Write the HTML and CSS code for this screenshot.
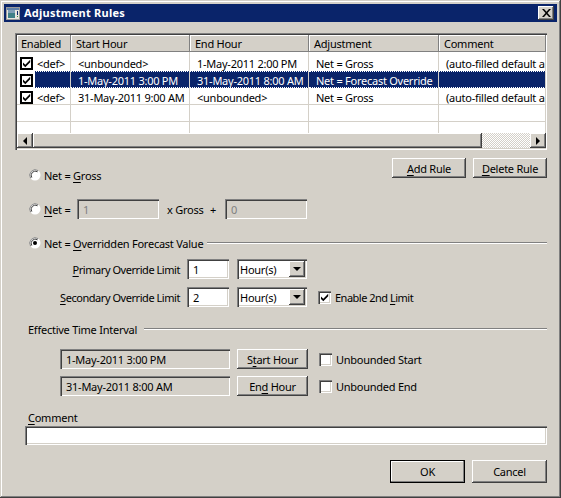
FILE: index.html
```html
<!DOCTYPE html>
<html lang="en">
<head>
<meta charset="utf-8">
<title>Adjustment Rules</title>
<link rel="stylesheet" href="styles.css">
</head>
<body>
<svg class="defs" width="0" height="0" aria-hidden="true">
  <symbol id="check" viewBox="0 0 13 13"><path d="M3 5.500v2.400l2.300 2.300 4.900-5V2.800L5.300 7.700z" fill="#000"/></symbol>
  <symbol id="radio" viewBox="0 0 12 12">
    <circle cx="6" cy="6" r="5.500" fill="#fff"/>
    <path d="M1.600 9.200A5.500 5.500 0 0 1 9.200 1.600" fill="none" stroke="#808080"/>
    <path d="M2.800 8.600A4.200 4.200 0 0 1 8.600 2.800" fill="none" stroke="#404040"/>
  </symbol>
  <symbol id="dot" viewBox="0 0 12 12"><circle cx="6" cy="6" r="2" fill="#000"/></symbol>
</svg>
<div class="window">
  <div class="titlebar">
    <svg class="app-icon" width="14" height="13" viewBox="0 0 14 13"><rect x=".5" y=".5" width="13" height="12" fill="#e8e6e0" stroke="#9a9a9a"/><rect x="1" y="1" width="12" height="2" fill="#5f7fa8"/><rect x="2" y="3" width="7" height="8" fill="#3f8088"/><rect x="2" y="3" width="7" height="3" fill="#7f9fb8"/><rect x="11" y="4" width="1" height="4" fill="#0a246a"/><rect x="11" y="9" width="1" height="1" fill="#3a8a3a"/></svg>
    <span class="title">Adjustment Rules</span>
    <span class="close-btn"><svg width="9" height="8" viewBox="0 0 9 8"><path d="M0 0h2l2.500 2.700L7 0h2L5.500 4 9 8H7L4.500 5.300 2 8H0l3.500-4z" fill="#000"/></svg></span>
  </div>
  <div class="content">
    <div class="grid-wrap">
      <table class="grid">
        <colgroup><col class="c1"><col class="c2"><col class="c3"><col class="c4"><col class="c5"></colgroup>
        <thead>
          <tr><th>Enabled</th><th>Start Hour</th><th>End Hour</th><th>Adjustment</th><th>Comment</th></tr>
        </thead>
        <tbody>
          <tr>
            <td><span class="cell-check"><svg width="13" height="13"><use href="#check"/></svg></span><span class="def">&lt;def&gt;</span></td>
            <td>&lt;unbounded&gt;</td><td>1-May-2011 2:00 PM</td><td>Net = Gross</td><td>(auto-filled default adjustment)</td>
          </tr>
          <tr class="selected">
            <td><span class="cell-check"><svg width="13" height="13"><use href="#check"/></svg></span></td>
            <td>1-May-2011 3:00 PM</td><td>31-May-2011 8:00 AM</td><td>Net = Forecast Override</td><td></td>
          </tr>
          <tr>
            <td><span class="cell-check"><svg width="13" height="13"><use href="#check"/></svg></span><span class="def">&lt;def&gt;</span></td>
            <td>31-May-2011 9:00 AM</td><td>&lt;unbounded&gt;</td><td>Net = Gross</td><td>(auto-filled default adjustment)</td>
          </tr>
          <tr><td></td><td></td><td></td><td></td><td></td></tr>
          <tr class="short"><td></td><td></td><td></td><td></td><td></td></tr>
        </tbody>
      </table>
      <div class="scrollbar">
        <span class="sb-btn"><i class="arrow-left"></i></span>
        <span class="sb-thumb"></span>
        <span class="sb-track"></span>
        <span class="sb-btn"><i class="arrow-right"></i></span>
      </div>
    </div>

    <div class="rule-buttons">
      <span class="btn btn-rule"><span><u>A</u>dd Rule</span></span>
      <span class="btn btn-rule"><span><u>D</u>elete Rule</span></span>
    </div>

    <div class="row row-gross">
      <svg class="radio" width="12" height="12"><use href="#radio"/></svg>
      <span>Net = <u>G</u>ross</span>
    </div>

    <div class="row row-formula">
      <svg class="radio" width="12" height="12"><use href="#radio"/></svg>
      <span class="net-label"><u>N</u>et =</span>
      <span class="field field-disabled w82">1</span>
      <span class="x-gross">x Gross</span>
      <span class="plus">+</span>
      <span class="field field-disabled w82">0</span>
    </div>

    <div class="row row-override">
      <svg class="radio" width="12" height="12"><use href="#radio"/><use href="#dot"/></svg>
      <span>Net = <u>O</u>verridden Forecast Value</span>
      <span class="rule"></span>
    </div>

    <div class="row row-limit first">
      <span class="limit-label"><u>P</u>rimary Override Limit</span>
      <span class="field w42 input">1</span>
      <span class="select"><span class="select-text">Hour(s)</span><span class="select-btn"><i class="arrow-down"></i></span></span>
    </div>

    <div class="row row-limit second">
      <span class="limit-label"><u>S</u>econdary Override Limit</span>
      <span class="field w42 input">2</span>
      <span class="select"><span class="select-text">Hour(s)</span><span class="select-btn"><i class="arrow-down"></i></span></span>
      <span class="check"><svg width="13" height="13"><use href="#check"/></svg></span>
      <span class="tight">Enable 2nd <u>L</u>imit</span>
    </div>

    <div class="row row-section">
      <span>Effective Time Interval</span>
      <span class="rule"></span>
    </div>

    <div class="row row-time first-time">
      <span class="field field-time">1-May-2011 3:00 PM</span>
      <span class="btn btn-time"><span>S<u>t</u>art Hour</span></span>
      <span class="check"></span>
      <span>Unbounded Start</span>
    </div>
    <div class="row row-time second-time">
      <span class="field field-time">31-May-2011 8:00 AM</span>
      <span class="btn btn-time"><span>En<u>d</u> Hour</span></span>
      <span class="check"></span>
      <span>Unbounded End</span>
    </div>

    <div class="comment-label"><u>C</u>omment</div>
    <div class="field comment-input"></div>

    <div class="actions">
      <span class="btn btn-action default"><span>OK</span></span>
      <span class="btn btn-action"><span>Cancel</span></span>
    </div>
  </div>
</div>
</body>
</html>
```
FILE: styles.css
```css
html, body { margin: 0; padding: 0; }
body { width: 561px; height: 498px; overflow: hidden; background: #d4d0c8; }
.defs { display: block; height: 0; }
.window {
  box-sizing: border-box; width: 561px; height: 498px; padding: 4px;
  background: #d4d0c8; color: #000;
  font: 11px/13px "Noto Sans", sans-serif; letter-spacing: -.25px;
  box-shadow: inset -1px -1px 0 #404040, inset 1px 1px 0 #d4d0c8, inset -2px -2px 0 #808080, inset 2px 2px 0 #fff;
}
u { text-underline-offset: 2px; text-decoration-thickness: 1px; }
.titlebar {
  display: flex; align-items: center; height: 18px; padding: 0 3px 0 2px;
  background: #0a246a; color: #fff; font-weight: 700; letter-spacing: .25px;
}
.app-icon { margin-right: 4px; flex: none; }
.title { flex: 1; padding-bottom: 2px; }
.close-btn {
  box-sizing: border-box; display: flex; align-items: center; justify-content: center;
  width: 16px; height: 14px; background: #d4d0c8;
  box-shadow: inset -1px -1px 0 #404040, inset 1px 1px 0 #fff, inset -2px -2px 0 #808080;
}
.content { padding: 11px 10px 0 21px; }

.grid-wrap {
  box-sizing: border-box; width: 532px; height: 117px; margin-left: -10px; padding: 2px 1px 2px 2px;
  background: #fff; overflow: hidden;
  box-shadow: inset 1px 1px 0 #808080, inset 2px 2px 0 #404040, inset -1px -1px 0 #fff, inset -2px -2px 0 #d4d0c8;
}
.grid { width: 529px; table-layout: fixed; border-collapse: separate; border-spacing: 0; }
.c1 { width: 54px; } .c2 { width: 119px; } .c3 { width: 119px; } .c4 { width: 130px; } .c5 { width: 107px; }
.grid th {
  box-sizing: border-box; height: 17px; padding: 0 0 1px 5px; text-align: left; font-weight: 400;
  background: #d4d0c8; overflow: hidden; white-space: nowrap;
  box-shadow: inset -1px -1px 0 #808080, inset 1px 1px 0 #fff;
}
.grid th:first-child { padding-left: 4px; }
.grid td {
  box-sizing: border-box; height: 17px; padding: 2px 0 0 7px;
  border-right: 1px solid #d4d0c8; border-bottom: 1px solid #d4d0c8;
  white-space: nowrap; overflow: hidden;
}
.grid tbody tr:first-child td { height: 19px; padding-top: 4px; }
.grid tbody tr:has(+ .selected) td { border-bottom: 0; }
.grid tr.short td { height: 11px; padding-top: 0; border-bottom: 0; }
.grid td:first-child { padding-left: 3px; }
.grid tr.selected td {
  background: #0a246a; color: #fff; border-top: 1px dotted #fff; border-bottom: 1px dotted #fff;
}
.grid tr.selected td:first-child { background: linear-gradient(90deg, #fff 18px, #0a246a 18px); }
.cell-check {
  display: inline-block; box-sizing: border-box; width: 13px; height: 13px; vertical-align: -2px;
  background: #fff; border: 2px solid #000;
}
.cell-check svg { display: block; margin: -2px; }
.def { margin-left: 4px; }

.scrollbar { display: flex; height: 15px; background: #d4d0c8; }
.sb-btn, .sb-thumb {
  box-sizing: border-box; display: flex; align-items: center; justify-content: center; background: #d4d0c8;
  box-shadow: inset -1px -1px 0 #404040, inset 1px 1px 0 #fff, inset -2px -2px 0 #808080;
}
.sb-btn { width: 16px; flex: none; }
.sb-thumb { width: 449px; flex: none; }
.sb-track { flex: 1; background: repeating-conic-gradient(#fff 0 25%, #d4d0c8 0 50%) 0 0 / 2px 2px; }
.arrow-left { border: 4px solid transparent; border-left: 0; border-right-color: #000; }
.arrow-right { border: 4px solid transparent; border-right: 0; border-left-color: #000; }
.arrow-down { border: 4px solid transparent; border-bottom: 0; border-top-color: #000; }

.btn {
  box-sizing: border-box; display: flex; align-items: center; justify-content: center; background: #d4d0c8;
  box-shadow: inset -1px -1px 0 #404040, inset 1px 1px 0 #fff, inset -2px -2px 0 #808080;
}
.rule-buttons { display: flex; justify-content: flex-end; gap: 7px; height: 20px; margin: 8px 0 0; }
.btn-rule { width: 74px; }

.row { display: flex; align-items: center; }
.radio { flex: none; margin: 0 3px 0 4px; }
.row-gross { height: 14px; margin-top: -10px; }
.row-formula { height: 20px; margin-top: 17px; }
.row-override { height: 14px; margin-top: 17px; }
.net-label { width: 33px; }
.field {
  box-sizing: border-box; display: flex; align-items: center; height: 20px; padding: 0 6px;
  box-shadow: inset 1px 1px 0 #808080, inset 2px 2px 0 #404040, inset -1px -1px 0 #fff, inset -2px -2px 0 #d4d0c8;
}
.field-disabled { color: #808080; }
.w82 { width: 82px; }
.x-gross { box-sizing: border-box; width: 43px; margin-left: 8px; }
.plus { width: 15px; }
.rule { flex: 1; height: 2px; margin-left: 4px; background: linear-gradient(#808080 50%, #fff 50%); }
.row-limit { height: 20px; }
.first { margin-top: 9px; }
.second { margin-top: 8px; }
.limit-label { width: 155px; margin-right: 7px; text-align: right; letter-spacing: -.45px; }
.tight { letter-spacing: -.5px; }
.input { background: #fff; }
.w42 { width: 42px; }
.select {
  box-sizing: border-box; display: flex; align-items: center; width: 70px; height: 20px; margin-left: 8px; background: #fff; padding: 2px;
  box-shadow: inset 1px 1px 0 #808080, inset 2px 2px 0 #404040, inset -1px -1px 0 #fff, inset -2px -2px 0 #d4d0c8;
}
.select-text { flex: 1; padding-left: 1px; }
.select-btn {
  box-sizing: border-box; display: flex; align-items: center; justify-content: center; width: 16px; height: 16px; background: #d4d0c8;
  box-shadow: inset -1px -1px 0 #404040, inset 1px 1px 0 #fff, inset -2px -2px 0 #808080;
}
.check {
  box-sizing: border-box; flex: none; display: block; width: 13px; height: 13px; margin: 0 4px 0 11px; background: #fff;
  box-shadow: inset 1px 1px 0 #808080, inset 2px 2px 0 #404040, inset -1px -1px 0 #fff, inset -2px -2px 0 #d4d0c8;
}
.check svg { display: block; }
.row-section { height: 14px; margin-top: 15px; margin-left: 3px; }
.row-section .rule { margin-left: 7px; }
.row-time { height: 20px; margin-left: 35px; }
.first-time { margin-top: 13px; }
.second-time { margin-top: 7px; }
.field-time { width: 170px; }
.btn-time { width: 71px; height: 20px; margin-left: 7px; }
.comment-label { margin: 15px 0 0 3px; height: 15px; }
.comment-input { width: 522px; height: 19px; background: #fff; }
.actions { display: flex; justify-content: flex-end; gap: 7px; margin-top: 15px; }
.btn-action { width: 75px; height: 23px; }
.btn-action.default { box-shadow: inset 0 0 0 1px #000, inset -2px -2px 0 #808080, inset 2px 2px 0 #fff; }
```
